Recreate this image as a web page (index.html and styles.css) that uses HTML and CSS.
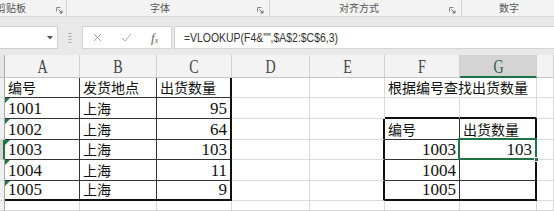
FILE: index.html
```html
<!DOCTYPE html>
<html>
<head>
<meta charset="utf-8">
<link rel="stylesheet" href="styles.css">
</head>
<body>
<div class="ribbon">
  <div class="grp g1"><span class="lbl">剪贴板</span><svg class="lau" width="7" height="7" viewBox="0 0 7 7"><path d="M0.5 4.5V0.5H4.5" fill="none" stroke="#888"/><path d="M2.5 2.5L6 6M6 3.5V6H3.5" fill="none" stroke="#666"/></svg></div>
  <div class="grp g2"><span class="lbl">字体</span><svg class="lau" width="7" height="7" viewBox="0 0 7 7"><path d="M0.5 4.5V0.5H4.5" fill="none" stroke="#888"/><path d="M2.5 2.5L6 6M6 3.5V6H3.5" fill="none" stroke="#666"/></svg></div>
  <div class="grp g3"><span class="lbl">对齐方式</span><svg class="lau" width="7" height="7" viewBox="0 0 7 7"><path d="M0.5 4.5V0.5H4.5" fill="none" stroke="#888"/><path d="M2.5 2.5L6 6M6 3.5V6H3.5" fill="none" stroke="#666"/></svg></div>
  <div class="grp g4"><span class="lbl">数字</span></div>
</div>
<div class="fbar">
  <div class="namebox"><svg width="6" height="4" viewBox="0 0 6 4"><path d="M0 0H6L3 3.5Z" fill="#555"/></svg></div>
  <div class="dots"><svg width="4" height="12" viewBox="0 0 4 12"><path d="M0.5 1.5H3.5M0.5 4.5H3.5M0.5 7.5H3.5M0.5 10.5H3.5" stroke="#aaa" stroke-width="1"/></svg></div>
  <div class="fxbox">
    <svg class="ico" width="9" height="9" viewBox="0 0 9 9"><path d="M1 1L8 8M8 1L1 8" stroke="#aaa" stroke-width="1"/></svg>
    <svg class="ico" width="11" height="9" viewBox="0 0 11 9"><path d="M1 5L4 8L10 1" fill="none" stroke="#aaa" stroke-width="1"/></svg>
    <span class="fx"><i>f</i><sub>x</sub></span>
  </div>
  <div class="finput"><span class="ftext">=VLOOKUP(F4&amp;"",$A$2:$C$6,3)</span></div>
</div>
<div class="sheet">
  <!-- header row -->
  <div class="c hd rh0"></div>
  <div class="c hd"><span class="hl">A</span></div>
  <div class="c hd"><span class="hl">B</span></div>
  <div class="c hd"><span class="hl">C</span></div>
  <div class="c hd"><span class="hl">D</span></div>
  <div class="c hd"><span class="hl">E</span></div>
  <div class="c hd"><span class="hl">F</span></div>
  <div class="c hd sel-hd"><span class="hl">G</span></div>
  <div class="c hd"></div>
  <!-- row 1 -->
  <div class="c rh"></div>
  <div class="c t"><span class="zh">编号</span></div>
  <div class="c t"><span class="zh">发货地点</span></div>
  <div class="c t tr"><span class="zh">出货数量</span></div>
  <div class="c"></div>
  <div class="c"></div>
  <div class="c ov"><span class="zh">根据编号查找出货数量</span></div>
  <div class="c"></div>
  <div class="c"></div>
  <!-- row 2 -->
  <div class="c rh"></div>
  <div class="c t tri"><span class="num">1001</span></div>
  <div class="c t"><span class="zh">上海</span></div>
  <div class="c t tr r"><span class="num">95</span></div>
  <div class="c"></div>
  <div class="c"></div>
  <div class="c tb"></div>
  <div class="c tb"></div>
  <div class="c"></div>
  <!-- row 3 -->
  <div class="c rh"></div>
  <div class="c t tri"><span class="num">1002</span></div>
  <div class="c t"><span class="zh">上海</span></div>
  <div class="c t tr r"><span class="num">64</span></div>
  <div class="c"></div>
  <div class="c tr"></div>
  <div class="c t"><span class="zh">编号</span></div>
  <div class="c t tr"><span class="zh">出货数量</span></div>
  <div class="c"></div>
  <!-- row 4 -->
  <div class="c rh rsel"></div>
  <div class="c t tri"><span class="num">1003</span></div>
  <div class="c t"><span class="zh">上海</span></div>
  <div class="c t tr r"><span class="num">103</span></div>
  <div class="c"></div>
  <div class="c tr"></div>
  <div class="c t r"><span class="num">1003</span></div>
  <div class="c t tr r selc"><span class="num">103</span><div class="selbox"></div><div class="handle"></div></div>
  <div class="c"></div>
  <!-- row 5 -->
  <div class="c rh"></div>
  <div class="c t tri"><span class="num">1004</span></div>
  <div class="c t"><span class="zh">上海</span></div>
  <div class="c t tr r"><span class="num">11</span></div>
  <div class="c"></div>
  <div class="c tr"></div>
  <div class="c t r"><span class="num">1004</span></div>
  <div class="c t tr"></div>
  <div class="c"></div>
  <!-- row 6 -->
  <div class="c rh"></div>
  <div class="c t tri tb"><span class="num">1005</span></div>
  <div class="c t tb"><span class="zh">上海</span></div>
  <div class="c t tr tb r"><span class="num">9</span></div>
  <div class="c"></div>
  <div class="c tr"></div>
  <div class="c t tb r"><span class="num">1005</span></div>
  <div class="c t tr tb"></div>
  <div class="c"></div>
  <!-- row 7 -->
  <div class="c rh"></div>
  <div class="c"></div>
  <div class="c"></div>
  <div class="c"></div>
  <div class="c"></div>
  <div class="c"></div>
  <div class="c"></div>
  <div class="c"></div>
  <div class="c"></div>
</div>
</body>
</html>
```
FILE: styles.css
```css
* { box-sizing: border-box; }
html, body { margin: 0; padding: 0; }
body {
  width: 554px;
  height: 211px;
  overflow: hidden;
  background: #ffffff;
  font-family: "Liberation Sans", "Noto Sans CJK SC", sans-serif;
}

/* ribbon group labels */
.ribbon {
  display: flex;
  height: 17px;
  background: #f3f3f3;
  border-bottom: 1px solid #dadada;
}
.grp {
  display: flex;
  align-items: center;
  border-right: 1px solid #d4d4d4;
  height: 16px;
}
.lbl {
  font-family: "Noto Sans CJK SC", sans-serif;
  font-size: 10px;
  line-height: 12px;
  color: #555;
  white-space: nowrap;
}
.lau { margin-left: auto; margin-top: 4px; }
.g1 { width: 67px; }
.g1 .lbl { margin-left: -4px; }
.g1 .lau { margin-right: 3px; }
.g2 { width: 203px; }
.g2 .lbl { margin-left: 83px; }
.g2 .lau { margin-right: 5px; }
.g3 { width: 192px; }
.g3 .lbl { margin-left: 69px; }
.g3 .lau { margin-right: 5px; }
.g4 { flex: 1; border-right: none; }
.g4 .lbl { margin-left: 37px; }

/* formula bar */
.fbar {
  display: flex;
  height: 38px;
  padding: 9px 0 6px 0;
  background: #e9e9e9;
}
.namebox {
  width: 59px;
  margin-left: -1px;
  background: #fff;
  border: 1px solid #cfcfcf;
  display: flex;
  align-items: center;
  justify-content: flex-end;
  padding-right: 4px;
}
.dots {
  width: 24px;
  display: flex;
  align-items: center;
  justify-content: center;
}
.fxbox {
  width: 90px;
  background: #fff;
  border: 1px solid #d4d4d4;
  display: flex;
  align-items: center;
  padding-left: 10px;
  gap: 19px;
}
.fx {
  font-family: "Liberation Serif", serif;
  font-size: 13px;
  color: #666;
}
.fx sub { font-size: 8px; font-style: italic; vertical-align: -1px; }
.finput {
  flex: 1;
  margin-left: 2px;
  background: #fff;
  border: 1px solid #d4d4d4;
  border-right: none;
  padding-left: 9px;
  line-height: 20px;
  white-space: nowrap;
}
.ftext {
  display: inline-block;
  font-size: 12px;
  color: #333;
  transform: scaleX(0.87);
  transform-origin: left center;
}

/* sheet grid */
.sheet {
  display: grid;
  grid-template-columns: 5px 75px 77px 75px 78px 75px 75px 77px 17px;
  grid-template-rows: 23px 20px 21px 21px 20px 21px 20px 10px;
}
.c {
  position: relative;
  border-right: 1px solid #dadada;
  border-bottom: 1px solid #dadada;
  display: flex;
  align-items: flex-end;
  padding: 0 3px 1px 3px;
  white-space: nowrap;
  min-width: 0;
}
.hd {
  background: #f3f3f3;
  border-right-color: #d0d0d0;
  border-bottom-color: #c6c6c6;
  justify-content: center;
  align-items: center;
  padding: 0;
}
.hl {
  display: inline-block;
  font-family: "Liberation Serif", serif;
  font-size: 18px;
  line-height: 20px;
  color: #444;
  transform: scaleX(0.78);
  margin-top: 2px;
}
.sel-hd {
  background: #d4d4d4;
  border-bottom: 2px solid #217346;
}
.sel-hd .hl { color: #2f5f44; }
.rh0 { background: #e6e6e6; border-right-color: #aaa; }
.rh {
  background: #f0f0f0;
  border-right-color: #a8a8a8;
  border-bottom-color: #dadada;
  padding: 0;
}
.rsel { background: #d4d4d4; border-right: 2px solid #217346; }

.zh {
  font-family: "Noto Sans CJK SC", sans-serif;
  font-size: 14px;
  line-height: 17px;
  color: #111;
}
.num {
  font-family: "Liberation Serif", serif;
  font-size: 17px;
  line-height: 17px;
  color: #111;
}
.r { justify-content: flex-end; }

.t { border-right-color: #333; border-bottom-color: #333; }
.tr { border-right: 2px solid #111; }
.tb { border-bottom: 2px solid #111; }
.ov { overflow: visible; border-right-color: transparent; }

.tri::before {
  content: "";
  position: absolute;
  left: 0;
  top: 0;
  border-top: 5px solid #1f7a45;
  border-right: 5px solid transparent;
}

.selc { overflow: visible; }
.selbox {
  position: absolute;
  left: -2px;
  top: -2px;
  right: -2px;
  bottom: -1px;
  border: 2px solid #217346;
  pointer-events: none;
}
.handle {
  position: absolute;
  right: -4px;
  bottom: -3px;
  width: 5px;
  height: 5px;
  background: #217346;
  border: 1px solid #fff;
  z-index: 2;
}
```
